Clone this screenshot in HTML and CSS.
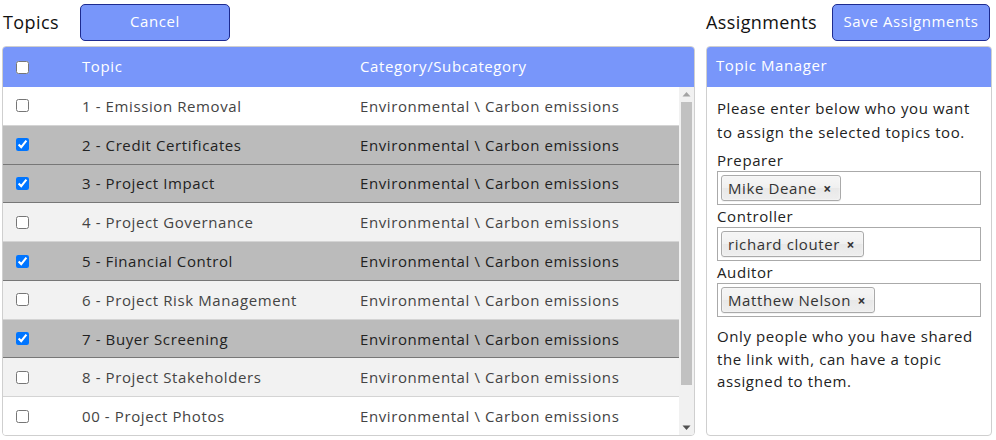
FILE: index.html
```html
<!DOCTYPE html>
<html>
<head>
<meta charset="utf-8">
<link rel="stylesheet" href="styles.css">
</head>
<body>
<div class="page">
  <section class="left">
    <div class="bar">
      <h2 class="title">Topics</h2>
      <button class="btn btn-cancel">Cancel</button>
    </div>
    <div class="panel">
      <div class="thead">
        <div class="c1"><input type="checkbox"></div>
        <div class="c2">Topic</div>
        <div class="c3">Category/Subcategory</div>
      </div>
      <div class="tbody">
        <div class="rows">
          <div class="row"><div class="c1"><input type="checkbox"></div><div class="c2">1 - Emission Removal</div><div class="c3">Environmental \ Carbon emissions</div></div>
          <div class="row sel"><div class="c1"><input type="checkbox" checked></div><div class="c2">2 - Credit Certificates</div><div class="c3">Environmental \ Carbon emissions</div></div>
          <div class="row sel"><div class="c1"><input type="checkbox" checked></div><div class="c2">3 - Project Impact</div><div class="c3">Environmental \ Carbon emissions</div></div>
          <div class="row alt"><div class="c1"><input type="checkbox"></div><div class="c2">4 - Project Governance</div><div class="c3">Environmental \ Carbon emissions</div></div>
          <div class="row sel"><div class="c1"><input type="checkbox" checked></div><div class="c2">5 - Financial Control</div><div class="c3">Environmental \ Carbon emissions</div></div>
          <div class="row alt"><div class="c1"><input type="checkbox"></div><div class="c2">6 - Project Risk Management</div><div class="c3">Environmental \ Carbon emissions</div></div>
          <div class="row sel"><div class="c1"><input type="checkbox" checked></div><div class="c2">7 - Buyer Screening</div><div class="c3">Environmental \ Carbon emissions</div></div>
          <div class="row alt"><div class="c1"><input type="checkbox"></div><div class="c2">8 - Project Stakeholders</div><div class="c3">Environmental \ Carbon emissions</div></div>
          <div class="row last"><div class="c1"><input type="checkbox"></div><div class="c2">00 - Project Photos</div><div class="c3">Environmental \ Carbon emissions</div></div>
        </div>
        <div class="vscroll">
          <div class="sb-btn"><svg width="15" height="15" viewBox="0 0 15 15"><polygon points="3.5,9.5 7.5,5 11.5,9.5" fill="#a3a3a3"/></svg></div>
          <div class="sb-track"><div class="sb-thumb"></div></div>
          <div class="sb-btn"><svg width="15" height="15" viewBox="0 0 15 15"><polygon points="3.5,5.5 11.5,5.5 7.5,10" fill="#505050"/></svg></div>
        </div>
      </div>
    </div>
  </section>
  <section class="right">
    <div class="bar">
      <h2 class="title">Assignments</h2>
      <button class="btn btn-save">Save Assignments</button>
    </div>
    <div class="panel">
      <div class="phead">Topic Manager</div>
      <div class="pbody">
        <p class="intro">Please enter below who you want to assign the selected topics too.</p>
        <label class="lbl">Preparer</label>
        <div class="field"><span class="chip">Mike Deane <span class="x">×</span></span></div>
        <label class="lbl">Controller</label>
        <div class="field"><span class="chip">richard clouter <span class="x">×</span></span></div>
        <label class="lbl">Auditor</label>
        <div class="field"><span class="chip">Matthew Nelson <span class="x">×</span></span></div>
        <p class="note">Only people who you have shared the link with, can have a topic assigned to them.</p>
      </div>
    </div>
  </section>
</div>
</body>
</html>
```
FILE: styles.css
```css
* { box-sizing: border-box; }
html, body { margin: 0; padding: 0; background: #fff; }
body {
  font-family: "Open Sans", "Noto Sans", sans-serif;
  font-size: 15px;
  letter-spacing: 0.6px;
  color: #222;
}
.page {
  display: flex;
  gap: 11px;
  padding: 4px 4px 4px 2px;
  height: 440px;
}
.left { width: 693px; display: flex; flex-direction: column; }
.right { width: 286px; display: flex; flex-direction: column; }
.bar {
  display: flex;
  align-items: center;
  height: 37px;
  margin-bottom: 5px;
}
.title {
  margin: 0 0 2px;
  font-size: 18px;
  font-weight: 400;
  letter-spacing: 0.4px;
  color: #111;
}
.left .title { margin-left: 1px; width: 77px; }
.right .title { width: 126px; }
.btn {
  height: 37px;
  border: 1px solid #1d2b8f;
  border-radius: 5px;
  background: #7896fa;
  color: #fff;
  font-family: inherit;
  font-size: 15px;
  letter-spacing: 0.6px;
  padding: 0 0 3px;
}
.btn-cancel { width: 150px; }
.btn-save { width: 158px; }
.panel {
  border: 1px solid #cfcfcf;
  border-radius: 4px;
  flex: 1;
  display: flex;
  flex-direction: column;
  overflow: hidden;
  min-height: 0;
}
.thead, .row {
  display: grid;
  grid-template-columns: 79px 278px 1fr;
  align-items: center;
}
.thead {
  background: #7896fa;
  color: #fff;
  height: 40px;
  padding-bottom: 3px;
  flex: none;
}
.c1 { padding-left: 9px; display: flex; align-items: center; }
.c1 input { margin: 0 0 0 4px; width: 13px; height: 13px; }
.thead .c1 input { margin-top: 3px; }
.tbody {
  flex: 1;
  display: flex;
  min-height: 0;
}
.rows { flex: 1; display: flex; flex-direction: column; }
.row {
  flex: 1;
  border-bottom: 1px solid #d4d4d4;
  background: #fff;
  color: #444;
}
.row.last { border-bottom: 0; }
.row.alt { background: #f2f2f2; }
.row.sel { background: #bbbbbb; color: #222; border-bottom-color: #777; }
.vscroll {
  width: 15px;
  flex: none;
  display: flex;
  flex-direction: column;
  background: #f1f1f1;
}
.sb-btn { height: 15px; flex: none; }
.sb-btn svg { display: block; }
.sb-track { flex: 1; display: flex; flex-direction: column; }
.sb-thumb {
  height: 283px;
  margin: 0 2px;
  background: #c1c1c1;
}
.phead {
  background: #7896fa;
  color: #fff;
  height: 40px;
  line-height: 37px;
  padding-left: 9px;
  flex: none;
}
.pbody { padding: 9px 10px 10px 10px; color: #222; }
.intro { margin: 0 0 5px; line-height: 24px; }
.lbl { display: block; line-height: 22px; }
.field {
  border: 1px solid #aaa;
  height: 34px;
  padding: 3px;
  display: flex;
  align-items: center;
}
.chip {
  display: inline-block;
  height: 26px;
  line-height: 24px;
  padding: 0 8px 0 6px;
  border: 1px solid #aaa;
  border-radius: 3px;
  background: linear-gradient(#f4f4f4 20%, #f0f0f0 50%, #e8e8e8 52%, #eee 100%);
  box-shadow: 0 0 2px #fff inset, 0 1px 0 rgba(0,0,0,0.05);
  color: #333;
}
.x { font-size: 14px; font-weight: 700; color: #333; margin-left: 2px; }
.note { margin: 8px 0 0; line-height: 22.5px; }
```
